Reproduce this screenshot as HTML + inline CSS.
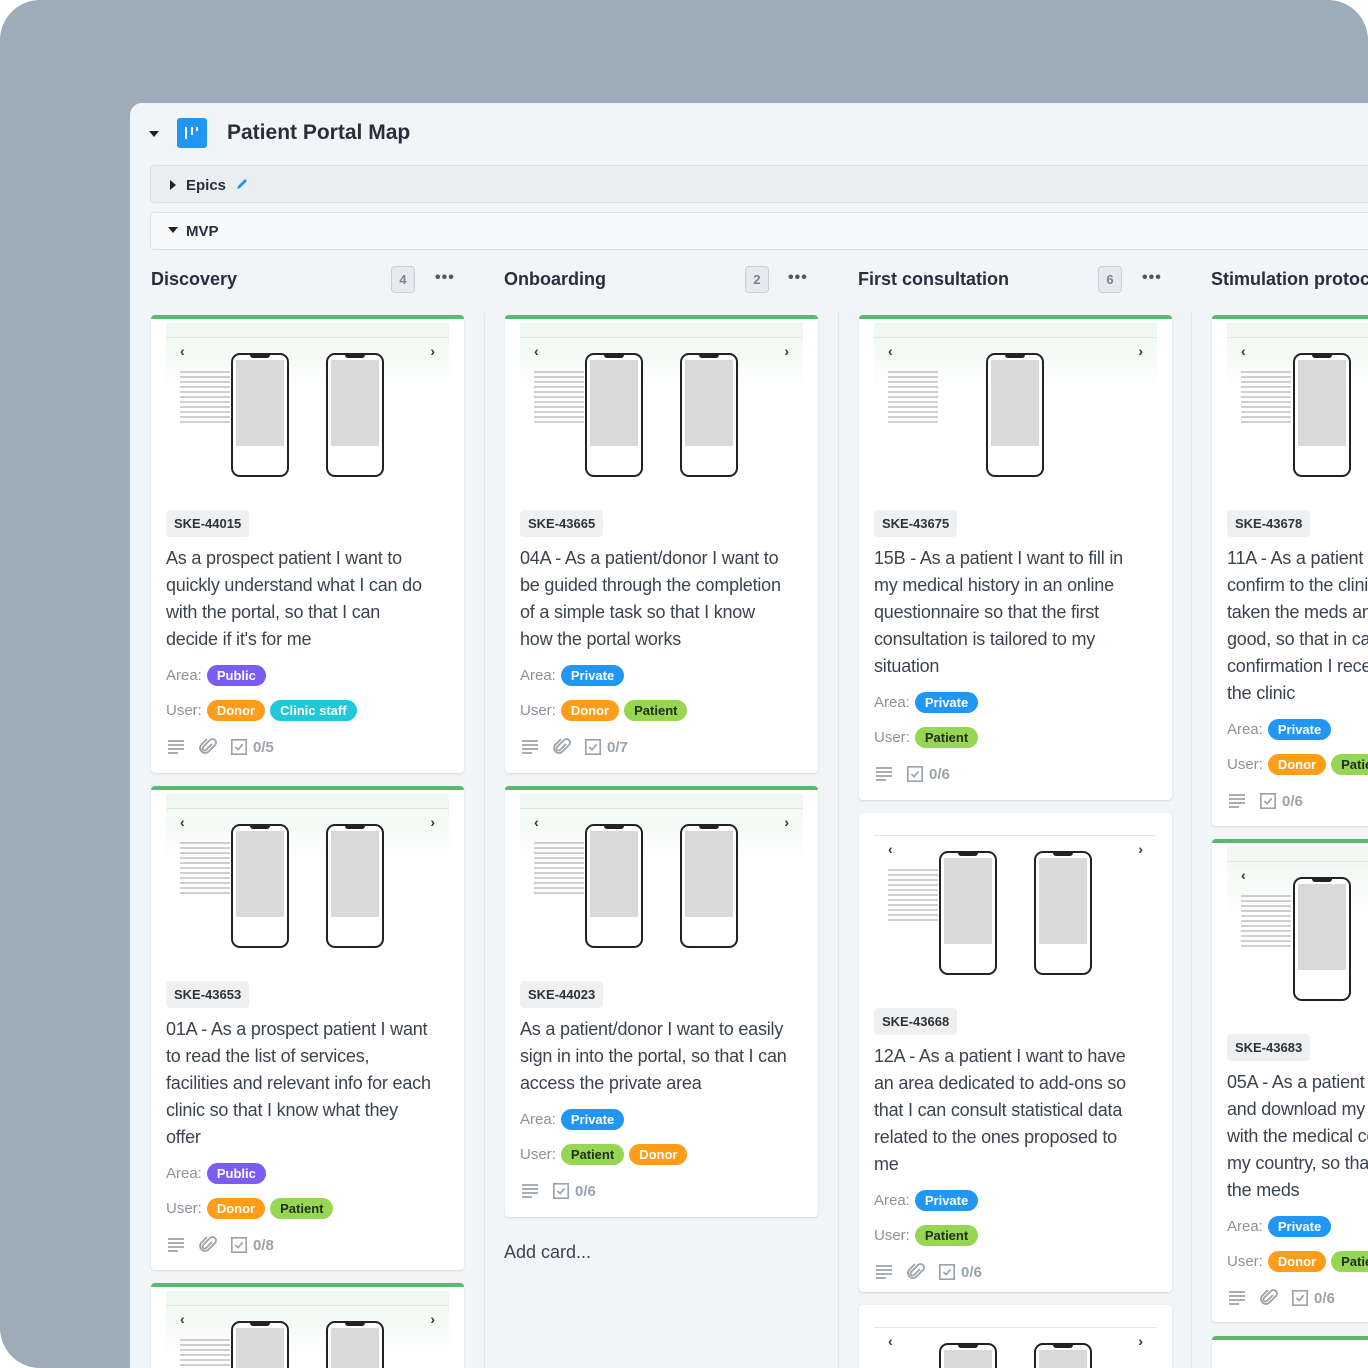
<!DOCTYPE html>
<html><head><meta charset="utf-8"><style>
*{box-sizing:border-box;margin:0;padding:0}
html,body{width:1368px;height:1368px;overflow:hidden;background:#fff;font-family:"Liberation Sans",sans-serif}
.wrap{position:relative;width:1368px;height:1368px;overflow:hidden;border-radius:40px 40px 0 40px}
.bg{position:absolute;left:0;top:0;width:1368px;height:1368px;background:#9eabb8}
.panel{position:absolute;left:130px;top:103px;width:1300px;height:1300px;background:#f2f5f8;border-radius:12px 0 0 0;overflow:hidden}
.abs{position:absolute}
.title{left:97px;top:18px;font-size:21px;font-weight:bold;color:#27303a}
.logo{left:47px;top:15px;width:30px;height:30px;background:#2196f3;border-radius:3px}
.logo i{position:absolute;background:#fff;width:2px;top:9px}
.bar{left:20px;width:1300px;height:38px;border:1px solid #dde2e7;border-radius:4px;font-size:15px;font-weight:bold;color:#27303a;padding:10px 0 0 35px}
.tri{position:absolute;width:0;height:0}
.colh{top:166px;font-size:18px;font-weight:bold;color:#27303a}
.cnt{top:163px;width:24px;height:27px;border:1px solid #c9cfd6;background:#e6eaee;border-radius:4px;font-size:13px;color:#7a838c;text-align:center;line-height:25px;font-weight:bold}
.dots{top:166px;font-size:16px;color:#555;letter-spacing:1px;font-weight:bold}
.card{position:absolute;width:313px;background:#fff;border-radius:4px;border-top:4px solid #5cb86a;box-shadow:0 1px 2px rgba(0,0,0,.12);padding:0 15px;overflow:hidden}
.th{position:relative;height:176px;margin:4px 0 0;background:linear-gradient(#eef7ef,#fff 40%)}
.th .tb{position:absolute;left:0;right:0;top:14px;height:1px;background:#e6e6e6}
.th .ch{position:absolute;top:20px;font-size:14px;font-weight:bold;color:#333}
.ph{position:absolute;top:30px;width:58px;height:124px;border:2px solid #222;border-radius:9px;background:#fff}
.ph:before{content:"";position:absolute;left:17px;top:-1px;width:20px;height:4px;background:#222;border-radius:0 0 3px 3px}
.ph:after{content:"";position:absolute;left:3px;top:5px;right:3px;height:86px;background:#d9d9d9}
.tx{position:absolute;left:14px;top:48px;width:50px;height:55px;background:repeating-linear-gradient(#bbb 0 2px,transparent 2px 5px);opacity:.7}
.tag{display:inline-block;margin-top:11px;background:#eef0f2;border-radius:4px;padding:6px 8px;font-size:13px;font-weight:bold;color:#2c333a}
.desc{margin-top:8px;font-size:18px;line-height:27px;color:#3a4450;white-space:nowrap;letter-spacing:-0.2px}
.row{margin-top:8px;height:28px;font-size:15px;color:#8a939c;display:flex;align-items:center;white-space:nowrap}
.row+.row{margin-top:7px}
.p{display:inline-block;border-radius:12px;padding:3px 10px;font-size:13px;font-weight:bold;color:#fff;margin-left:5px}
.pu{background:#7b5cf5}.pr{background:#2196f3}.do{background:#ff9d1a}.cs{background:#22c7d8}.pa{background:#96d653;color:#22301a}
.ft{height:46px;display:flex;align-items:center;color:#9aa2aa;font-size:15px;font-weight:bold;gap:12px}
.ft svg{display:block}
.ck{display:flex;align-items:center;gap:5px}
.sep{position:absolute;width:1px;background:#e3e7eb;top:210px;height:1100px}
</style></head><body><div class="wrap">
<svg width="0" height="0" style="position:absolute"><defs>
<symbol id="ln" viewBox="0 0 20 20"><path d="M2 4h16M2 8h16M2 12h16M2 16h10" stroke="#9aa2aa" stroke-width="1.8" fill="none"/></symbol>
<symbol id="cl" viewBox="0 0 20 20"><path d="M14 7l-6 6a2 2 0 0 1-3-3l7-7a3.5 3.5 0 0 1 5 5l-7 7a5 5 0 0 1-7-7l6-6" stroke="#9aa2aa" stroke-width="1.8" fill="none"/></symbol>
<symbol id="cb" viewBox="0 0 20 20"><rect x="2" y="2" width="16" height="16" stroke="#9aa2aa" stroke-width="1.8" fill="none"/><path d="M6 10l3 3 5-6" stroke="#9aa2aa" stroke-width="1.8" fill="none"/></symbol>
</defs></svg>
<div class="bg"></div>
<div class="panel">
 <div class="tri abs" style="left:19px;top:28px;border-left:5px solid transparent;border-right:5px solid transparent;border-top:6px solid #222"></div>
 <div class="abs logo"><i style="left:8px;height:12px"></i><i style="left:14px;height:8px"></i><i style="left:19px;height:4px"></i></div>
 <div class="abs title">Patient Portal Map</div>
 <div class="abs bar" style="top:62px;background:#ebeef1"><div class="tri" style="left:19px;top:14px;border-top:5px solid transparent;border-bottom:5px solid transparent;border-left:6px solid #222"></div>Epics <svg width="16" height="16" viewBox="0 0 16 16" style="vertical-align:-2px;margin-left:4px"><path d="M3 13l1-3 7-7 2 2-7 7z" fill="#2196f3"/></svg></div>
 <div class="abs bar" style="top:109px;background:#f7f9fa"><div class="tri" style="left:17px;top:14px;border-left:5px solid transparent;border-right:5px solid transparent;border-top:6px solid #222"></div>MVP</div>

 <div class="abs colh" style="left:21px">Discovery</div><div class="abs cnt" style="left:261px">4</div><div class="abs dots" style="left:305px">•••</div>
 <div class="abs colh" style="left:374px">Onboarding</div><div class="abs cnt" style="left:615px">2</div><div class="abs dots" style="left:658px">•••</div>
 <div class="abs colh" style="left:728px">First consultation</div><div class="abs cnt" style="left:968px">6</div><div class="abs dots" style="left:1012px">•••</div>
 <div class="abs colh" style="left:1081px">Stimulation protocol</div>
 <div class="sep" style="left:354px"></div><div class="sep" style="left:708px"></div><div class="sep" style="left:1061px"></div>
</div>

<!-- col1 -->
<div class="card" style="left:151px;top:315px;height:458px">
 <div class="th"><div class="tb"></div><div class="ch" style="left:14px">‹</div><div class="ch" style="right:14px">›</div><div class="tx"></div><div class="ph" style="left:65px"></div><div class="ph" style="left:160px"></div></div>
 <div class="tag">SKE-44015</div>
 <div class="desc">As a prospect patient I want to<br>quickly understand what I can do<br>with the portal, so that I can<br>decide if it's for me</div>
 <div class="row">Area: <span class="p pu">Public</span></div>
 <div class="row">User: <span class="p do">Donor</span><span class="p cs">Clinic staff</span></div>
 <div class="ft"><svg width="20" height="20"><use href="#ln"/></svg><svg width="20" height="20"><use href="#cl"/></svg><span class="ck"><svg width="18" height="18"><use href="#cb"/></svg>0/5</span></div>
</div>
<div class="card" style="left:151px;top:786px;height:484px">
 <div class="th"><div class="tb"></div><div class="ch" style="left:14px">‹</div><div class="ch" style="right:14px">›</div><div class="tx"></div><div class="ph" style="left:65px"></div><div class="ph" style="left:160px"></div></div>
 <div class="tag">SKE-43653</div>
 <div class="desc">01A - As a prospect patient I want<br>to read the list of services,<br>facilities and relevant info for each<br>clinic so that I know what they<br>offer</div>
 <div class="row">Area: <span class="p pu">Public</span></div>
 <div class="row">User: <span class="p do">Donor</span><span class="p pa">Patient</span></div>
 <div class="ft"><svg width="20" height="20"><use href="#ln"/></svg><svg width="20" height="20"><use href="#cl"/></svg><span class="ck"><svg width="18" height="18"><use href="#cb"/></svg>0/8</span></div>
</div>
<div class="card" style="left:151px;top:1283px;height:120px">
 <div class="th"><div class="tb"></div><div class="ch" style="left:14px">‹</div><div class="ch" style="right:14px">›</div><div class="tx"></div><div class="ph" style="left:65px"></div><div class="ph" style="left:160px"></div></div>
</div>

<!-- col2 -->
<div class="card" style="left:505px;top:315px;height:458px">
 <div class="th"><div class="tb"></div><div class="ch" style="left:14px">‹</div><div class="ch" style="right:14px">›</div><div class="tx"></div><div class="ph" style="left:65px"></div><div class="ph" style="left:160px"></div></div>
 <div class="tag">SKE-43665</div>
 <div class="desc">04A - As a patient/donor I want to<br>be guided through the completion<br>of a simple task so that I know<br>how the portal works</div>
 <div class="row">Area: <span class="p pr">Private</span></div>
 <div class="row">User: <span class="p do">Donor</span><span class="p pa">Patient</span></div>
 <div class="ft"><svg width="20" height="20"><use href="#ln"/></svg><svg width="20" height="20"><use href="#cl"/></svg><span class="ck"><svg width="18" height="18"><use href="#cb"/></svg>0/7</span></div>
</div>
<div class="card" style="left:505px;top:786px;height:431px">
 <div class="th"><div class="tb"></div><div class="ch" style="left:14px">‹</div><div class="ch" style="right:14px">›</div><div class="tx"></div><div class="ph" style="left:65px"></div><div class="ph" style="left:160px"></div></div>
 <div class="tag">SKE-44023</div>
 <div class="desc">As a patient/donor I want to easily<br>sign in into the portal, so that I can<br>access the private area</div>
 <div class="row">Area: <span class="p pr">Private</span></div>
 <div class="row">User: <span class="p pa">Patient</span><span class="p do">Donor</span></div>
 <div class="ft"><svg width="20" height="20"><use href="#ln"/></svg><span class="ck"><svg width="18" height="18"><use href="#cb"/></svg>0/6</span></div>
</div>
<div class="abs" style="left:504px;top:1242px;font-size:18px;color:#3a4450">Add card...</div>

<!-- col3 -->
<div class="card" style="left:859px;top:315px;height:485px">
 <div class="th"><div class="tb"></div><div class="ch" style="left:14px">‹</div><div class="ch" style="right:14px">›</div><div class="tx"></div><div class="ph" style="left:112px"></div></div>
 <div class="tag">SKE-43675</div>
 <div class="desc">15B - As a patient I want to fill in<br>my medical history in an online<br>questionnaire so that the first<br>consultation is tailored to my<br>situation</div>
 <div class="row">Area: <span class="p pr">Private</span></div>
 <div class="row">User: <span class="p pa">Patient</span></div>
 <div class="ft"><svg width="20" height="20"><use href="#ln"/></svg><span class="ck"><svg width="18" height="18"><use href="#cb"/></svg>0/6</span></div>
</div>
<div class="card" style="left:859px;top:813px;height:479px;border-top-color:#fff">
 <div class="th" style="background:#fff"><div class="tb"></div><div class="ch" style="left:14px">‹</div><div class="ch" style="right:14px">›</div><div class="tx"></div><div class="ph" style="left:65px"></div><div class="ph" style="left:160px"></div></div>
 <div class="tag">SKE-43668</div>
 <div class="desc">12A - As a patient I want to have<br>an area dedicated to add-ons so<br>that I can consult statistical data<br>related to the ones proposed to<br>me</div>
 <div class="row">Area: <span class="p pr">Private</span></div>
 <div class="row">User: <span class="p pa">Patient</span></div>
 <div class="ft"><svg width="20" height="20"><use href="#ln"/></svg><svg width="20" height="20"><use href="#cl"/></svg><span class="ck"><svg width="18" height="18"><use href="#cb"/></svg>0/6</span></div>
</div>
<div class="card" style="left:859px;top:1305px;height:100px;border-top-color:#fff">
 <div class="th" style="background:#fff"><div class="tb"></div><div class="ch" style="left:14px">‹</div><div class="ch" style="right:14px">›</div><div class="ph" style="left:65px"></div><div class="ph" style="left:160px"></div></div>
</div>

<!-- col4 -->
<div class="card" style="left:1212px;top:315px;height:511px">
 <div class="th"><div class="tb"></div><div class="ch" style="left:14px">‹</div><div class="tx"></div><div class="ph" style="left:66px"></div></div>
 <div class="tag">SKE-43678</div>
 <div class="desc">11A - As a patient I want to<br>confirm to the clinic that I have<br>taken the meds and all is<br>good, so that in case of no<br>confirmation I receive a call from<br>the clinic</div>
 <div class="row">Area: <span class="p pr">Private</span></div>
 <div class="row">User: <span class="p do">Donor</span><span class="p pa">Patient</span></div>
 <div class="ft"><svg width="20" height="20"><use href="#ln"/></svg><span class="ck"><svg width="18" height="18"><use href="#cb"/></svg>0/6</span></div>
</div>
<div class="card" style="left:1212px;top:839px;height:483px">
 <div class="th"><div class="tb"></div><div class="ch" style="left:14px">‹</div><div class="tx"></div><div class="ph" style="left:66px"></div></div>
 <div class="tag">SKE-43683</div>
 <div class="desc">05A - As a patient I want to view<br>and download my prescriptions<br>with the medical codes used in<br>my country, so that I can buy<br>the meds</div>
 <div class="row">Area: <span class="p pr">Private</span></div>
 <div class="row">User: <span class="p do">Donor</span><span class="p pa">Patient</span></div>
 <div class="ft"><svg width="20" height="20"><use href="#ln"/></svg><svg width="20" height="20"><use href="#cl"/></svg><span class="ck"><svg width="18" height="18"><use href="#cb"/></svg>0/6</span></div>
</div>
<div class="card" style="left:1212px;top:1336px;height:60px"></div>
</div></body></html>
